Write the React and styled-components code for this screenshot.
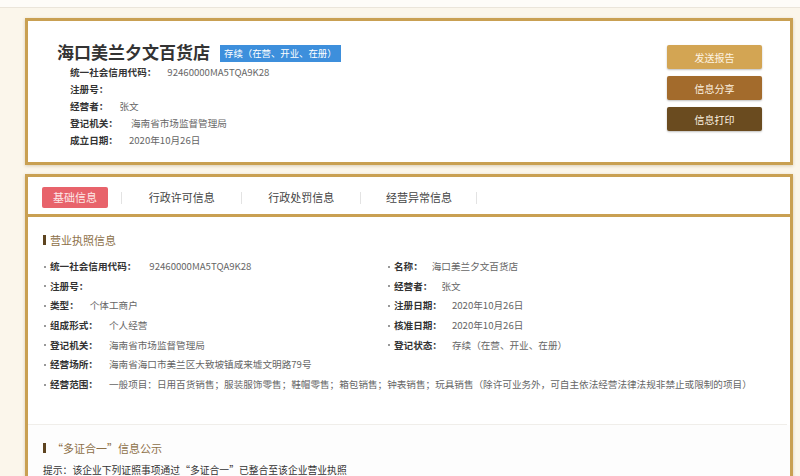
import React from "react";
import styled, { createGlobalStyle } from "styled-components";

const Global = createGlobalStyle`
  html, body { margin: 0; padding: 0; }
  body {
    background: #fbf6eb;
    font-family: "Noto Sans CJK SC", "Noto Sans", sans-serif;
    color: #333;
    width: 800px;
    height: 476px;
    overflow: hidden;
  }
`;

const TopStrip = styled.div`
  height: 7px;
  background: #fefcf8;
  border-bottom: 1px solid #ebe5da;
`;

const Page = styled.div`
  padding: 10px 7px 0 25px;
  display: flex;
  flex-direction: column;
  gap: 9px;
`;

const Card = styled.div`
  border: 3px solid #c9a052;
  background: #fff;
  box-shadow: 0 1px 3px rgba(120, 90, 30, 0.25);
`;

const HeaderCard = styled(Card)`
  display: flex;
  justify-content: space-between;
  padding: 20px 28px 13px 29px;
`;

const Info = styled.div`
  display: flex;
  flex-direction: column;
`;

const TitleLine = styled.div`
  display: flex;
  align-items: center;
  gap: 10px;
  height: 22px;
  margin-bottom: 1px;
`;

const Title = styled.h1`
  margin: 0;
  font-size: 17px;
  font-weight: 700;
  color: #333;
  line-height: 22px;
`;

const Badge = styled.span`
  background: #3d8fdc;
  color: #fff;
  font-size: 9.4px;
  height: 17px;
  line-height: 17px;
  padding: 0 4px;
  margin-top: 2px;
`;

const HeadRow = styled.div`
  display: flex;
  height: 17px;
  line-height: 17px;
  padding-left: 13px;
  font-size: 9.6px;
`;

const Label = styled.span`
  font-weight: 700;
  color: #333;
  margin-right: ${(p) => p.$gap || 11}px;
  white-space: nowrap;
`;

const Value = styled.span`
  color: #666;
  white-space: nowrap;
`;

const Buttons = styled.div`
  display: flex;
  flex-direction: column;
  gap: 7px;
  margin-top: 4px;
`;

const ActionButton = styled.button`
  width: 95px;
  height: 24px;
  border: none;
  border-radius: 2px;
  background: ${(p) => p.$bg};
  color: #fdf3e2;
  font-family: inherit;
  font-size: 10px;
  box-shadow: 0 1px 2px rgba(0, 0, 0, 0.25);
  padding: 0;
`;

const TabBar = styled.div`
  height: 40px;
  display: flex;
  align-items: center;
  border-bottom: 3px solid #c9a052;
  padding-top: 3px;
  box-sizing: border-box;
`;

const Tab = styled.div`
  width: ${(p) => p.$w || 119.5}px;
  height: 21px;
  display: flex;
  align-items: center;
  justify-content: center;
  position: relative;
  font-size: 11px;
  color: #444;
  &::after {
    content: "";
    position: absolute;
    right: 0;
    top: 5px;
    height: 12px;
    border-right: 1px solid #e3e3e3;
  }
`;

const ActiveTab = styled.span`
  background: #e8636b;
  color: #fde8e8;
  width: 66px;
  height: 21px;
  line-height: 21px;
  text-align: center;
  border-radius: 2px;
`;

const Content = styled.div`
  padding: 15px 15px 0 15px;
`;

const SectionTitle = styled.div`
  display: flex;
  align-items: center;
  gap: 4px;
  font-size: 11px;
  color: #8d7048;
  line-height: 16px;
  &::before {
    content: "";
    width: 3px;
    height: 10px;
    background: #5e4420;
  }
`;

const Grid = styled.div`
  display: grid;
  grid-template-columns: 344px 1fr;
  padding-left: 1px;
  margin-top: 9px;
`;

const Item = styled.div`
  display: flex;
  align-items: center;
  height: 19.67px;
  line-height: 19.67px;
  font-size: 9.6px;
  grid-column: ${(p) => (p.$full ? "1 / -1" : "auto")};
  &::before {
    content: "";
    width: 2px;
    height: 2px;
    border-radius: 50%;
    background: #777;
    margin-right: 4px;
    flex: none;
  }
`;

const Divider = styled.div`
  margin: 29px -12px 0 -15px;
  border-top: 1px solid #f0eeea;
`;

const Lower = styled.div`
  background: #fdfdfd;
  margin: 0 -15px;
  padding: 15px 15px 0 15px;
`;

const QuoteTitle = styled(SectionTitle)`
  gap: 6px;
`;

const Hint = styled.div`
  font-size: 9.8px;
  color: #333;
  line-height: 18px;
  margin-top: 5px;
`;

const headRows = [
  ["统一社会信用代码：", "92460000MA5TQA9K28"],
  ["注册号：", ""],
  ["经营者：", "张文"],
  ["登记机关：", "海南省市场监督管理局", 13],
  ["成立日期：", "2020年10月26日"],
];

const items = [
  ["统一社会信用代码：", "92460000MA5TQA9K28", 13],
  ["名称：", "海口美兰夕文百货店", 9],
  ["注册号：", ""],
  ["经营者：", "张文", 9],
  ["类型：", "个体工商户", 11],
  ["注册日期：", "2020年10月26日", 10],
  ["组成形式：", "个人经营", 11],
  ["核准日期：", "2020年10月26日", 10],
  ["登记机关：", "海南省市场监督管理局", 11],
  ["登记状态：", "存续（在营、开业、在册）", 10],
];

const fullItems = [
  ["经营场所：", "海南省海口市美兰区大致坡镇咸来墟文明路79号"],
  [
    "经营范围：",
    "一般项目：日用百货销售；服装服饰零售；鞋帽零售；箱包销售；钟表销售；玩具销售（除许可业务外，可自主依法经营法律法规非禁止或限制的项目）",
  ],
];

export default function App() {
  return (
    <>
      <Global />
      <TopStrip />
      <Page lang="zh-CN">
        <HeaderCard>
          <Info>
            <TitleLine>
              <Title>海口美兰夕文百货店</Title>
              <Badge>存续（在营、开业、在册）</Badge>
            </TitleLine>
            {headRows.map(([l, v, g]) => (
              <HeadRow key={l}>
                <Label $gap={g}>{l}</Label>
                <Value>{v}</Value>
              </HeadRow>
            ))}
          </Info>
          <Buttons>
            <ActionButton $bg="#d3a553">发送报告</ActionButton>
            <ActionButton $bg="#a36b2c">信息分享</ActionButton>
            <ActionButton $bg="#6a4b1f">信息打印</ActionButton>
          </Buttons>
        </HeaderCard>

        <Card>
          <TabBar>
            <Tab $w={94}>
              <ActiveTab>基础信息</ActiveTab>
            </Tab>
            <Tab>行政许可信息</Tab>
            <Tab>行政处罚信息</Tab>
            <Tab $w={116}>经营异常信息</Tab>
          </TabBar>
          <Content>
            <SectionTitle>营业执照信息</SectionTitle>
            <Grid>
              {items.map(([l, v, g]) => (
                <Item key={l}>
                  <Label $gap={g}>{l}</Label>
                  <Value>{v}</Value>
                </Item>
              ))}
              {fullItems.map(([l, v]) => (
                <Item key={l} $full>
                  <Label $gap={11}>{l}</Label>
                  <Value>{v}</Value>
                </Item>
              ))}
            </Grid>
            <Divider />
            <Lower>
              <QuoteTitle>“多证合一”信息公示</QuoteTitle>
              <Hint>提示：该企业下列证照事项通过“多证合一”已整合至该企业营业执照</Hint>
            </Lower>
          </Content>
        </Card>
      </Page>
    </>
  );
}
